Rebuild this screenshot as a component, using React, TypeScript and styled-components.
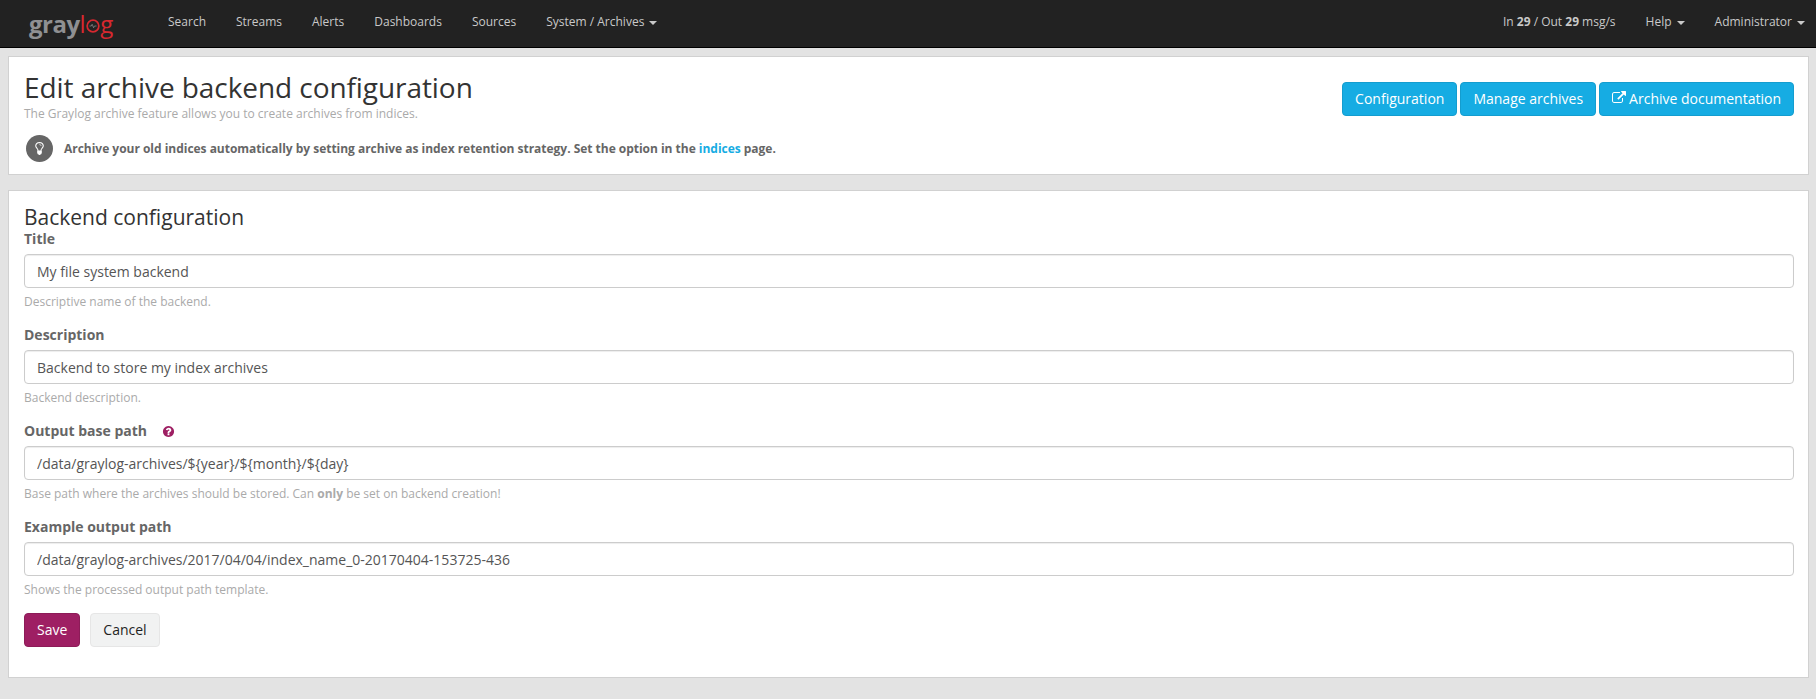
import React from "react";
import styled, { createGlobalStyle } from "styled-components";

const GlobalStyle = createGlobalStyle`
  html, body {
    margin: 0;
    padding: 0;
    background: #e3e3e3;
    color: #666;
    font-family: "Open Sans", "Noto Sans", sans-serif;
    font-size: 14px;
    line-height: 20px;
  }
  * {
    box-sizing: border-box;
  }
`;

const Navbar = styled.nav`
  display: flex;
  align-items: center;
  height: 48px;
  padding-left: 29px;
  background: #222;
  border-bottom: 1px solid #000;
`;

const Logo = styled.a`
  display: flex;
  align-items: center;
  width: 124px;
  height: 47px;
  font-size: 24px;
  line-height: 30px;
  letter-spacing: -0.5px;
`;

const LogoGray = styled.span`
  color: #8f9092;
  font-weight: 700;
`;

const LogoRed = styled.span`
  color: #d7282f;
  font-weight: 400;
`;

const LogoRing = styled.svg`
  width: 14px;
  height: 14px;
  margin: 5px 0 0 1px;
`;

const NavList = styled.div`
  display: flex;
  align-items: center;
  margin-bottom: 3px;
  font-size: 12px;
`;

const NavRight = styled(NavList)`
  margin-left: auto;
  margin-right: -4px;
`;

const NavItem = styled.a`
  padding: 0 15px;
  color: #c9c9c9;
  white-space: nowrap;

  b {
    font-weight: 700;
  }
`;

const Caret = styled.span`
  display: inline-block;
  width: 0;
  height: 0;
  margin-left: 5px;
  vertical-align: middle;
  border-top: 4px solid #c9c9c9;
  border-left: 4px solid transparent;
  border-right: 4px solid transparent;
`;

const Main = styled.main`
  padding: 8px 7px 22px 8px;
`;

const Card = styled.section`
  background: #fff;
  border: 1px solid #d1d1d1;
  padding: 15px 14px 15px 15px;

  & + & {
    margin-top: 15px;
  }
`;

const HeaderCard = styled(Card)`
  display: flex;
  justify-content: space-between;
  padding-bottom: 12px;
`;

const Heading = styled.h1`
  margin: 0;
  color: #333;
  font-size: 28px;
  font-weight: 400;
  line-height: 30px;
  letter-spacing: -0.07px;
`;

const Lead = styled.p`
  margin: 3px 0 0;
  color: #aaa;
  font-size: 12px;
  line-height: 18px;
`;

const Tip = styled.div`
  display: flex;
  align-items: center;
  gap: 11px;
  margin-top: 12px;
  font-size: 12px;
  font-weight: 700;
  letter-spacing: -0.02px;
  color: #666;

  a {
    color: #16ace3;
  }
`;

const TipIcon = styled.span`
  display: flex;
  align-items: center;
  justify-content: center;
  width: 27px;
  height: 27px;
  margin-left: 2px;
  border-radius: 50%;
  background: #666;

  svg {
    width: 15px;
    height: 15px;
    fill: #fff;
  }
`;

const ButtonGroup = styled.div`
  display: flex;
  gap: 3px;
  margin-top: 10px;
`;

const Button = styled.button<{ $variant?: "info" | "primary" | "default" }>`
  height: 34px;
  padding: 0 12px;
  border-radius: 4px;
  border: 1px solid
    ${(p) =>
      p.$variant === "primary" ? "#8d1c58" : p.$variant === "default" ? "#e6e6e6" : "#149dcf"};
  background: ${(p) =>
    p.$variant === "primary" ? "#9e1f63" : p.$variant === "default" ? "#f1f2f2" : "#16ace3"};
  color: ${(p) => (p.$variant === "default" ? "#1f1f1f" : "#fff")};
  font-family: inherit;
  font-size: 14px;
  line-height: 20px;
  white-space: nowrap;

  svg {
    width: 14px;
    height: 14px;
    margin-right: 3px;
    fill: #fff;
    vertical-align: -1px;
  }
`;

const SectionTitle = styled.h2`
  margin: 0;
  color: #333;
  font-size: 21px;
  font-weight: 400;
  line-height: 23px;
`;

const Field = styled.div`
  margin-bottom: 15px;
`;

const Label = styled.label`
  display: flex;
  align-items: center;
  gap: 15px;
  margin-bottom: 5px;
  font-weight: 700;
  color: #666;

  svg {
    width: 13px;
    height: 13px;
    fill: #9e1f63;
  }
`;

const Input = styled.input`
  display: block;
  width: 100%;
  height: 34px;
  padding: 6px 12px;
  background: #fff;
  border: 1px solid #ccc;
  border-radius: 4px;
  box-shadow: inset 0 1px 1px rgba(0, 0, 0, 0.075);
  color: #555;
  font-family: inherit;
  font-size: 14px;
`;

const Help = styled.span`
  display: block;
  margin-top: 5px;
  color: #aaa;
  font-size: 12px;
  line-height: 17px;
`;

const Actions = styled.div`
  display: flex;
  gap: 10px;
  margin-bottom: 15px;
`;

const ExternalIcon = () => (
  <svg viewBox="0 0 1792 1792">
    <path d="M1408 928v320q0 119-84.5 203.5t-203.5 84.5h-832q-119 0-203.5-84.5t-84.5-203.5v-832q0-119 84.5-203.5t203.5-84.5h704q14 0 23 9t9 23v64q0 14-9 23t-23 9h-704q-66 0-113 47t-47 113v832q0 66 47 113t113 47h832q66 0 113-47t47-113v-320q0-14 9-23t23-9h64q14 0 23 9t9 23zm384-864v512q0 26-19 45t-45 19-45-19l-176-176-652 652q-10 10-23 10t-23-10l-114-114q-10-10-10-23t10-23l652-652-176-176q-19-19-19-45t19-45 45-19h512q26 0 45 19t19 45z" />
  </svg>
);

const BulbIcon = () => (
  <svg viewBox="0 0 1792 1792">
    <path d="M1120 576q0 13-9.5 22.5t-22.5 9.5-22.5-9.5-9.5-22.5q0-46-54-71t-106-25q-13 0-22.5-9.5t-9.5-22.5 9.5-22.5 22.5-9.5q50 0 99.5 16t87 54 37.5 90zm160 0q0-72-34.5-134t-90-101.5-123-62-136.5-22.5-136.5 22.5-123 62-90 101.5-34.5 134q0 101 68 180 10 11 30.5 33t30.5 33q128 153 141 298h228q13-145 141-298 10-11 30.5-33t30.5-33q68-79 68-180zm128 0q0 155-103 268-45 49-74.5 87t-59.5 95.5-34 107.5q47 28 47 82 0 37-25 64 25 27 25 64 0 52-45 81 13 23 13 47 0 46-31.5 71t-77.5 25q-20 44-60 70t-87 26-87-26-60-70q-46 0-77.5-25t-31.5-71q0-24 13-47-45-29-45-81 0-37 25-64-25-27-25-64 0-54 47-82-4-50-34-107.5t-59.5-95.5-74.5-87q-103-113-103-268 0-99 44.5-184.5t117-142 164-89 186.5-32.5 186.5 32.5 164 89 117 142 44.5 184.5z" />
  </svg>
);

const QuestionIcon = () => (
  <svg viewBox="0 0 1792 1792">
    <path d="M1024 1376v-192q0-14-9-23t-23-9h-192q-14 0-23 9t-9 23v192q0 14 9 23t23 9h192q14 0 23-9t9-23zm256-672q0-88-55.5-163t-138.5-116-170-41q-243 0-371 213-15 24 8 42l132 100q7 6 19 6 16 0 25-12 53-68 86-92 34-24 86-24 48 0 85.5 26t37.5 59q0 38-20 61t-68 45q-63 28-115.5 86.5t-52.5 125.5v36q0 14 9 23t23 9h192q14 0 23-9t9-23q0-19 21.5-49.5t54.5-49.5q32-18 49-28.5t46-35 44.5-48 28-60.5 12.5-81zm384 192q0 209-103 385.5t-279.5 279.5-385.5 103-385.5-103-279.5-279.5-103-385.5 103-385.5 279.5-279.5 385.5-103 385.5 103 279.5 279.5 103 385.5z" />
  </svg>
);

const fields = [
  {
    label: "Title",
    value: "My file system backend",
    help: "Descriptive name of the backend.",
  },
  {
    label: "Description",
    value: "Backend to store my index archives",
    help: "Backend description.",
  },
  {
    label: "Output base path",
    value: "/data/graylog-archives/${year}/${month}/${day}",
    hint: true,
    help: (
      <>
        Base path where the archives should be stored. Can <b>only</b> be set on backend creation!
      </>
    ),
  },
  {
    label: "Example output path",
    value: "/data/graylog-archives/2017/04/04/index_name_0-20170404-153725-436",
    help: "Shows the processed output path template.",
  },
];

export default function App() {
  return (
    <>
      <GlobalStyle />
      <Navbar>
        <Logo>
          <LogoGray>gray</LogoGray>
          <LogoRed>l</LogoRed>
          <LogoRing viewBox="0 0 24 24">
            <circle cx="12" cy="12" r="10" fill="none" stroke="#d7282f" strokeWidth="3" />
            <path d="M6 12h3l1.5-3 2.5 6 1.5-3H18" fill="none" stroke="#8f9092" strokeWidth="1.2" />
          </LogoRing>
          <LogoRed>g</LogoRed>
        </Logo>
        <NavList>
          <NavItem>Search</NavItem>
          <NavItem>Streams</NavItem>
          <NavItem>Alerts</NavItem>
          <NavItem>Dashboards</NavItem>
          <NavItem>Sources</NavItem>
          <NavItem>
            System / Archives
            <Caret />
          </NavItem>
        </NavList>
        <NavRight>
          <NavItem>
            In <b>29</b> / Out <b>29</b> msg/s
          </NavItem>
          <NavItem>
            Help
            <Caret />
          </NavItem>
          <NavItem>
            Administrator
            <Caret />
          </NavItem>
        </NavRight>
      </Navbar>
      <Main>
        <HeaderCard>
          <div>
            <Heading>Edit archive backend configuration</Heading>
            <Lead>The Graylog archive feature allows you to create archives from indices.</Lead>
            <Tip>
              <TipIcon>
                <BulbIcon />
              </TipIcon>
              <span>
                Archive your old indices automatically by setting archive as index retention
                strategy. Set the option in the <a>indices</a> page.
              </span>
            </Tip>
          </div>
          <ButtonGroup>
            <Button>Configuration</Button>
            <Button>Manage archives</Button>
            <Button>
              <ExternalIcon />
              Archive documentation
            </Button>
          </ButtonGroup>
        </HeaderCard>
        <Card>
          <SectionTitle>Backend configuration</SectionTitle>
          {fields.map((f) => (
            <Field key={f.label}>
              <Label>
                {f.label}
                {f.hint && <QuestionIcon />}
              </Label>
              <Input value={f.value} readOnly />
              <Help>{f.help}</Help>
            </Field>
          ))}
          <Actions>
            <Button $variant="primary">Save</Button>
            <Button $variant="default">Cancel</Button>
          </Actions>
        </Card>
      </Main>
    </>
  );
}
